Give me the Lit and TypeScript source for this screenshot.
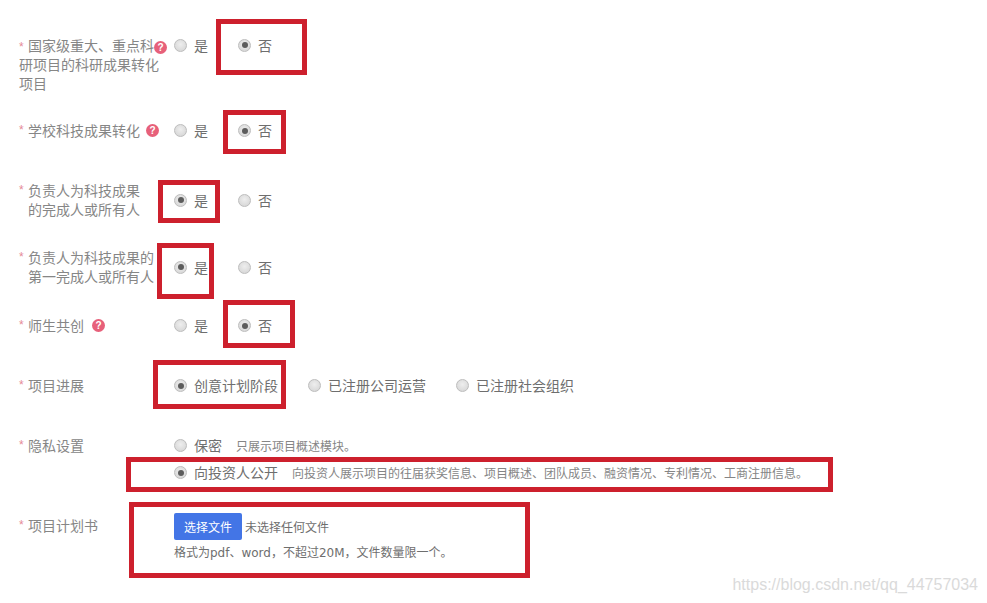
import { LitElement, html, css } from "lit";
import { customElement } from "lit/decorators.js";

type Opt = { text: string; on?: boolean };

const BOXES = [
  [216, 19, 91, 56],
  [223, 110, 63, 44],
  [158, 180, 62, 43],
  [157, 243, 57, 56],
  [223, 300, 72, 48],
  [153, 360, 133, 49],
  [126, 457, 707, 35],
  [129, 502, 401, 76],
];

@customElement("app-root")
export class AppRoot extends LitElement {
  static styles = css`
    :host {
      display: block;
      position: relative;
      width: 987px;
      height: 603px;
      overflow: hidden;
      background: #fff;
      font-family: "Noto Sans CJK SC", "Liberation Sans", sans-serif;
      font-size: 14px;
      line-height: 19px;
      color: #6e6e6e;
    }
    .form {
      display: flex;
      flex-direction: column;
      padding: 35.5px 0 0 19px;
    }
    .row {
      display: grid;
      grid-template-columns: 155px 1fr;
      align-items: center;
    }
    .top { align-items: start; }
    .gap-s { margin-top: 29px; }
    .gap-m { margin-top: 30px; }
    .gap-l { margin-top: 41px; }
    .gap-f { margin-top: 28.5px; }
    .gap-x { margin-top: 34px; }
    .label {
      display: flex;
      color: #868686;
      white-space: nowrap;
    }
    .star {
      flex: none;
      width: 9px;
      color: #e58a96;
      font-family: "Liberation Sans", sans-serif;
      font-size: 12px;
    }
    .flow { display: block; }
    .flow .star { display: inline-block; line-height: 12px; }
    .help {
      display: inline-block;
      width: 13px;
      height: 13px;
      border-radius: 50%;
      background: #e7607a;
      color: #fff;
      font: bold 10px/13px "Liberation Sans", sans-serif;
      text-align: center;
      vertical-align: 0;
    }
    .help.after { margin: 3px 0 0 6px; }
    .help.far { margin: 3px 0 0 8px; }
    .options { display: flex; align-items: center; gap: 30px; }
    .opt { display: flex; align-items: center; gap: 7px; white-space: nowrap; }
    .dot {
      flex: none;
      box-sizing: border-box;
      width: 13px;
      height: 13px;
      border-radius: 50%;
      border: 1px solid #bdbdbd;
      background: radial-gradient(circle at 50% 40%, #eeeeee, #d2d2d2);
      display: flex;
      align-items: center;
      justify-content: center;
    }
    .dot.on::after {
      content: "";
      width: 6px;
      height: 6px;
      border-radius: 50%;
      background: #5c5c5c;
    }
    .stack { display: flex; flex-direction: column; gap: 8px; }
    .privacy { display: flex; align-items: center; gap: 14px; }
    .desc { font-size: 12px; color: #858585; white-space: nowrap; }
    .file { display: flex; align-items: center; gap: 3px; font-size: 12px; color: #6e6e6e; }
    .btn {
      width: 68px;
      height: 27px;
      border: 0;
      padding: 0;
      border-radius: 2px;
      background: #4375e6;
      color: #fff;
      font: inherit;
    }
    .hint {
      font-family: "DejaVu Sans", "Noto Sans CJK SC", sans-serif;
      font-size: 12px;
      color: #6e6e6e;
      margin-top: 4px;
      white-space: nowrap;
    }
    .upload { display: flex; flex-direction: column; margin-top: -3px; }
    .mark {
      position: absolute;
      box-sizing: border-box;
      border: 5px solid #cd202d;
      pointer-events: none;
    }
    .watermark {
      position: absolute;
      right: 9px;
      bottom: 9px;
      font: 16px/19px "Liberation Sans", sans-serif;
      color: #dadada;
      white-space: nowrap;
    }
  `;

  private radios(opts: Opt[]) {
    return html`<div class="options">${opts.map(
      (o) => html`<label class="opt"><span class="dot ${o.on ? "on" : ""}"></span>${o.text}</label>`
    )}</div>`;
  }

  private yesNo(yes: boolean) {
    return this.radios([{ text: "是", on: yes }, { text: "否", on: !yes }]);
  }

  render() {
    return html`
      <div class="form">
        <div class="row top">
          <div class="flow label"><span class="star">*</span>国家级重大、重点科<span class="help">?</span><br />研项目的科研成果转化<br />项目</div>
          ${this.yesNo(false)}
        </div>
        <div class="row gap-f">
          <div class="label"><span class="star">*</span><span>学校科技成果转化</span><span class="help after">?</span></div>
          ${this.yesNo(false)}
        </div>
        <div class="row gap-l">
          <div class="label"><span class="star">*</span><span>负责人为科技成果<br />的完成人或所有人</span></div>
          ${this.yesNo(true)}
        </div>
        <div class="row gap-s">
          <div class="label"><span class="star">*</span><span>负责人为科技成果的<br />第一完成人或所有人</span></div>
          ${this.yesNo(true)}
        </div>
        <div class="row gap-m">
          <div class="label"><span class="star">*</span><span>师生共创</span><span class="help far">?</span></div>
          ${this.yesNo(false)}
        </div>
        <div class="row gap-l">
          <div class="label"><span class="star">*</span><span>项目进展</span></div>
          ${this.radios([{ text: "创意计划阶段", on: true }, { text: "已注册公司运营" }, { text: "已注册社会组织" }])}
        </div>
        <div class="row gap-l top">
          <div class="label"><span class="star">*</span><span>隐私设置</span></div>
          <div class="stack">
            <div class="privacy"><label class="opt"><span class="dot"></span>保密</label><span class="desc">只展示项目概述模块。</span></div>
            <div class="privacy"><label class="opt"><span class="dot on"></span>向投资人公开</label><span class="desc">向投资人展示项目的往届获奖信息、项目概述、团队成员、融资情况、专利情况、工商注册信息。</span></div>
          </div>
        </div>
        <div class="row gap-x top">
          <div class="label"><span class="star">*</span><span>项目计划书</span></div>
          <div class="upload">
            <div class="file"><button class="btn">选择文件</button><span>未选择任何文件</span></div>
            <div class="hint">格式为pdf、word，不超过20M，文件数量限一个。</div>
          </div>
        </div>
      </div>
      ${BOXES.map(
        ([x, y, w, h]) => html`<div class="mark" style="left:${x}px;top:${y}px;width:${w}px;height:${h}px"></div>`
      )}
      <div class="watermark">https://blog.csdn.net/qq_44757034</div>
    `;
  }
}
